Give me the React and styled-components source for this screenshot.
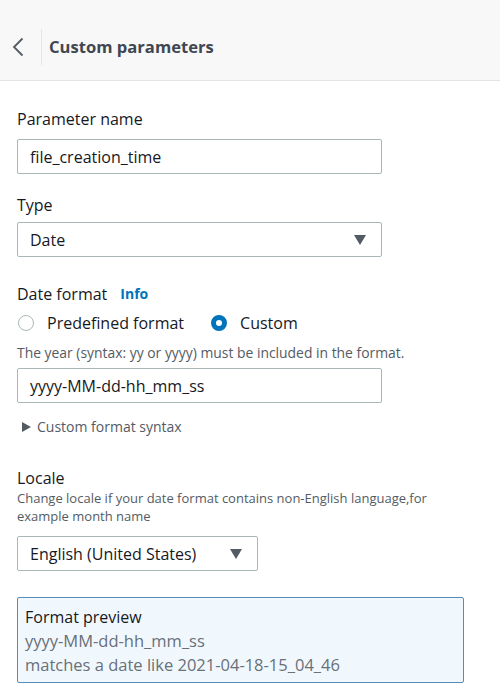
import React from 'react';
import styled, { createGlobalStyle } from 'styled-components';

const GlobalStyle = createGlobalStyle`
  body {
    margin: 0;
    background: #ffffff;
    font-family: "Open Sans", "Noto Sans", sans-serif;
    color: #16191f;
  }
`;

const Page = styled.div`
  width: 500px;
  height: 692px;
  overflow: hidden;
  background: #ffffff;
`;

const Header = styled.header`
  height: 81px;
  background: #f8f8f8;
  border-bottom: 1px solid #e3e3e3;
  display: flex;
  align-items: center;
  padding: 13px 0 0 11px;
  box-sizing: border-box;
`;

const BackButton = styled.button`
  border: none;
  background: none;
  padding: 0;
  width: 14px;
  height: 24px;
  display: flex;
  align-items: center;
  justify-content: center;
`;

const Divider = styled.div`
  width: 1px;
  height: 36px;
  background: #e6e6e6;
  margin: 0 7px 0 16px;
`;

const Title = styled.h1`
  margin: 0;
  font-size: 16.6px;
  font-weight: 700;
  color: #414750;
`;

const Body = styled.div`
  padding: 27px 0 0 17px;
  display: flex;
  flex-direction: column;
`;

const Field = styled.div`
  display: flex;
  flex-direction: column;
  margin-bottom: ${p => p.$gap || 0}px;
`;

const Label = styled.div`
  font-size: 16px;
  line-height: 22px;
  color: #16191f;
  display: flex;
  align-items: center;
  gap: 13px;
  margin-top: ${p => p.$top || 0}px;
`;

const InfoLink = styled.span`
  color: #0073bb;
  font-weight: 700;
  font-size: 14px;
`;

const Hint = styled.div`
  font-size: ${p => p.$size || 13}px;
  line-height: 18px;
  color: #545b64;
  width: ${p => p.$width || 'auto'};
`;

const Input = styled.div`
  box-sizing: border-box;
  width: ${p => p.$width || 365}px;
  height: 35px;
  border: 1px solid #aab7b8;
  border-radius: 2px;
  display: flex;
  align-items: center;
  justify-content: space-between;
  padding: 0 15px 0 12px;
  font-size: 16px;
  color: #16191f;
  margin-top: ${p => p.$top || 0}px;
`;

const Caret = styled.span`
  width: 0;
  height: 0;
  border-left: 6.5px solid transparent;
  border-right: 6.5px solid transparent;
  border-top: 10px solid #545b64;
`;

const RadioRow = styled.div`
  display: flex;
  align-items: center;
  margin: 7px 0 10px 1px;
`;

const RadioOption = styled.label`
  display: flex;
  align-items: center;
  gap: 13px;
  font-size: 16px;
  color: #16191f;
  margin-right: 27px;
`;

const RadioCircle = styled.span`
  box-sizing: border-box;
  width: 16px;
  height: 16px;
  border-radius: 50%;
  border: ${p => (p.$checked ? '5px solid #0073bb' : '1.5px solid #aab7b8')};
  background: #fff;
`;

const Expander = styled.div`
  display: flex;
  align-items: center;
  gap: 6px;
  margin: 14px 0 0 5px;
  font-size: 14px;
  color: #545b64;
`;

const Arrow = styled.span`
  width: 0;
  height: 0;
  border-top: 5px solid transparent;
  border-bottom: 5px solid transparent;
  border-left: 9px solid #545b64;
`;

const Preview = styled.div`
  box-sizing: border-box;
  width: 447px;
  height: 86px;
  margin-top: 26px;
  background: #f1f8fd;
  border: 1px solid #5a8db3;
  border-radius: 2px;
  padding: 7px 7px;
  font-size: 16.5px;
  line-height: 24px;
`;

const PreviewTitle = styled.div`
  color: #16191f;
  font-size: 16px;
  font-weight: 500;
`;

const PreviewLine = styled.div`
  color: #687078;
`;

const App = () => {
    return (
        <Page>
            <GlobalStyle />
            <Header>
                <BackButton aria-label="Back">
                    <svg width="12" height="20" viewBox="0 0 12 20" fill="none">
                        <path d="M10.5 1.5 L2 10 L10.5 18.5" stroke="#545b64" strokeWidth="1.8" />
                    </svg>
                </BackButton>
                <Divider />
                <Title>Custom parameters</Title>
            </Header>
            <Body>
                <Field $gap={20}>
                    <Label>Parameter name</Label>
                    <Input $top={9}>file_creation_time</Input>
                </Field>
                <Field $gap={26}>
                    <Label>Type</Label>
                    <Input $top={6}>
                        Date
                        <Caret />
                    </Input>
                </Field>
                <Field>
                    <Label>
                        Date format <InfoLink>Info</InfoLink>
                    </Label>
                    <RadioRow>
                        <RadioOption>
                            <RadioCircle />
                            Predefined format
                        </RadioOption>
                        <RadioOption>
                            <RadioCircle $checked />
                            Custom
                        </RadioOption>
                    </RadioRow>
                    <Hint $size={13.9}>The year (syntax: yy or yyyy) must be included in the format.</Hint>
                    <Input $top={6}>yyyy-MM-dd-hh_mm_ss</Input>
                    <Expander>
                        <Arrow />
                        Custom format syntax
                    </Expander>
                </Field>
                <Field>
                    <Label $top={31}>Locale</Label>
                    <Hint $width="460px">
                        Change locale if your date format contains non-English language,for example month name
                    </Hint>
                    <Input $width={241} $top={11}>
                        English (United States)
                        <Caret />
                    </Input>
                </Field>
                <Preview>
                    <PreviewTitle>Format preview</PreviewTitle>
                    <PreviewLine>yyyy-MM-dd-hh_mm_ss</PreviewLine>
                    <PreviewLine>matches a date like 2021-04-18-15_04_46</PreviewLine>
                </Preview>
            </Body>
        </Page>
    );
};

export default App;
